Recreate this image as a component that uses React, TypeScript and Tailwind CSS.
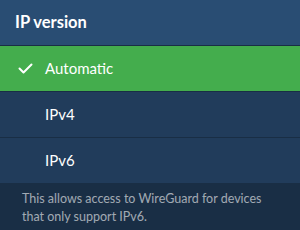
import type {FunctionComponent} from 'react'

const options = ['Automatic', 'IPv4', 'IPv6']

const Tick: FunctionComponent = () => (
  <svg width="15" height="11" viewBox="0 0 15 11" fill="none">
    <path d="M1.5 5.5l4 4L13.5 1.5" stroke="white" strokeWidth="2" strokeLinecap="round" strokeLinejoin="round" />
  </svg>
)

const App: FunctionComponent = () => {
  const selected = 'Automatic'

  return (
    <div className="flex h-[230px] w-[300px] flex-col gap-px bg-[#192e45] font-['Lato',sans-serif] text-white">
      <div className="flex h-[45px] shrink-0 items-center bg-[#294d73] px-[15px] text-[16.5px] font-bold">
        IP version
      </div>
      {options.map(opt => {
        const active = opt === selected
        return (
          <div
            key={opt}
            className={
              active
                ? 'flex h-[45px] shrink-0 items-center bg-[#44ad4d] text-[15px]'
                : 'flex h-[45px] shrink-0 items-center bg-[#213c5b] text-[15px]'
            }
          >
            <span className="flex w-[45px] shrink-0 justify-center pl-[6px]">{active && <Tick />}</span>
            <span>{opt}</span>
          </div>
        )
      })}
      <p className="px-[22px] pt-[6px] text-[12.5px] leading-[18px] text-white/60">
        This allows access to WireGuard for devices that only support IPv6.
      </p>
    </div>
  )
}

export default App
